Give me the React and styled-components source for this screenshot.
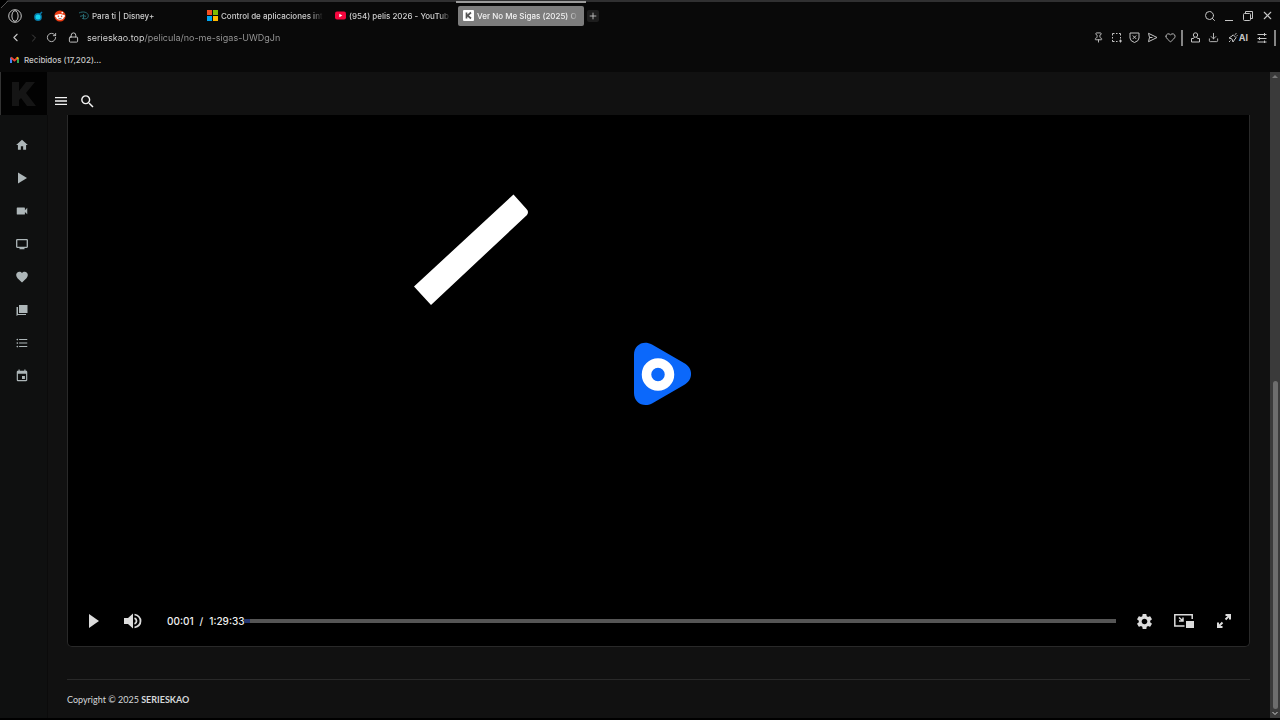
import styled, { createGlobalStyle } from "styled-components";
import { useState } from "react";
import {
  ChevronLeft,
  ChevronRight,
  Download,
  Heart,
  Lock,
  Pin,
  Plus,
  RotateCw,
  Search,
  X,
} from "lucide-react";
import {
  MdEvent,
  MdFavorite,
  MdFormatListBulleted,
  MdHome,
  MdMenu,
  MdSearch,
  MdSettings,
  MdVideocam,
} from "react-icons/md";

const GlobalStyle = createGlobalStyle`
  * {
    box-sizing: border-box;
  }
  body {
    margin: 0;
    background: #090909;
    color: #d0d0d0;
    font-family: Inter, "Liberation Sans", sans-serif;
    font-size: 8px;
  }
  button {
    display: flex;
    align-items: center;
    justify-content: center;
    padding: 0;
    border: none;
    background: none;
    color: inherit;
    font: inherit;
    cursor: pointer;
  }
  svg {
    display: block;
    flex-shrink: 0;
  }
`;

const Window = styled.div`
  display: flex;
  flex-direction: column;
  min-height: 100vh;
  border-top: 2px solid #303031;
  border-bottom: 2px solid #000;
  position: relative;
`;
const Corner = styled.svg`
  position: absolute;
  left: 0;
  top: -2px;
`;
const TabStrip = styled.div`
  display: flex;
  align-items: center;
  height: 27px;
  padding: 0 6px 0 8px;
`;
const Pinned = styled.div`
  display: flex;
  align-items: center;
  gap: 10px;
  width: 66px;
`;
const Tabs = styled.div`
  display: flex;
  gap: 2px;
  flex: 1;
  align-items: center;
`;
const Tab = styled.button`
  position: relative;
  justify-content: flex-start;
  gap: 3px;
  width: 126px;
  height: 20px;
  padding: 0 5px;
  border-radius: 2px;
  background: ${(p) => (p.$active ? "#7d7d7d" : "none")};
  color: ${(p) => (p.$active ? "#f2f2f2" : "#cecece")};
  font-weight: 500;
`;
const TabAccent = styled.span`
  position: absolute;
  top: -5px;
  left: -2px;
  right: -2px;
  height: 2px;
  background: #9b9b9b;
`;
const TabTitle = styled.span`
  flex: 1;
  min-width: 0;
  overflow: hidden;
  white-space: nowrap;
  text-align: left;
  mask-image: linear-gradient(90deg, #000 88%, transparent);
`;
const NewTab = styled.button`
  width: 12px;
  height: 12px;
  margin-left: 1px;
  border-radius: 2px;
  background: #1d1d1d;
`;
const IconRow = styled.div`
  display: flex;
  align-items: center;
  gap: ${(p) => p.$gap || 6}px;
  color: #c4c4c4;
`;
const AddressBar = styled.div`
  display: flex;
  align-items: center;
  height: 17px;
  padding: 0 4px 0 9px;
`;
const Site = styled.label`
  display: flex;
  align-items: center;
  flex: 1;
  gap: 8px;
  margin-left: 11px;
`;
const UrlInput = styled.input`
  flex: 1;
  padding: 0;
  border: none;
  outline: none;
  font: inherit;
  font-size: 9px;
  background: linear-gradient(90deg, #dedede 57px, #9a9a9a 57px);
  background-clip: text;
  -webkit-text-fill-color: transparent;
`;
const Divider = styled.span`
  width: 2px;
  height: 16px;
  margin-left: ${(p) => (p.$start ? 5 : 0)}px;
  background: #858585;
`;
const AiButton = styled.button`
  gap: 1px;
  padding: 0 2px;
  font-size: 9px;
  font-weight: 700;
`;
const Bookmarks = styled.div`
  display: flex;
  align-items: center;
  height: 26px;
  padding: 2px 0 0 10px;
`;
const Bookmark = styled.a`
  display: flex;
  align-items: center;
  gap: 5px;
  color: #c8c8c8;
  font-weight: 500;
  text-decoration: none;
`;

const Page = styled.div`
  display: grid;
  grid-template-columns: 48px 1fr 10px;
  grid-template-rows: 43px 1fr;
  flex: 1;
  background: #111;
`;
const Logo = styled.a`
  display: flex;
  align-items: center;
  justify-content: center;
  background: #020202;
  border-left: 1px solid #333;
  margin-right: 1px;
`;
const Header = styled.header`
  display: flex;
  align-items: center;
  gap: 10px;
  padding: 15px 0 0 5px;
  color: #f4f4f4;
`;
const ScrollTrack = styled.div`
  grid-column: 3;
  grid-row: 1 / 3;
  display: flex;
  flex-direction: column;
  align-items: center;
  padding: 2px 0 0;
  background: #3a3a3a;
  color: #777;
`;
const ScrollThumb = styled.div`
  width: 5px;
  height: 51%;
  margin-top: auto;
  border-radius: 3px;
  background: #6d6d6d;
`;
const Sidebar = styled.nav`
  display: flex;
  flex-direction: column;
  align-items: center;
  gap: 19px;
  padding: 23px 4px 0 0;
  border-right: 1px solid #0b0b0b;
  background: #0f1010;
  color: #adb6b8;
`;
const SideLink = styled.a`
  display: block;
  color: inherit;
`;
const Main = styled.main`
  display: flex;
  flex-direction: column;
  padding: 0 20px 0 19px;
`;
const Player = styled.section`
  display: flex;
  flex-direction: column;
  flex: 1;
  border: 1px solid #292929;
  border-top: none;
  border-radius: 0 0 5px 5px;
  background: #000;
`;
const Stage = styled.div`
  display: flex;
  flex: 1;
  align-items: center;
  justify-content: center;
  padding-top: 36px;
`;
const Controls = styled.div`
  display: flex;
  align-items: center;
  height: 50px;
  padding: 0 5px 0 16px;
  color: #dcdcdc;
`;
const ControlButton = styled.button`
  width: ${(p) => p.$width || 40}px;
  height: 40px;
`;
const Time = styled.div`
  display: flex;
  gap: 6px;
  margin-left: 5px;
  color: #f0f0f0;
  font-size: 10px;
  font-weight: 500;
`;
const Seek = styled.input`
  flex: 1;
  min-width: 0;
  height: 4px;
  margin: 0 8px 0 0;
  appearance: none;
  background: linear-gradient(90deg, #25376f 6px, #555 6px);
  &::-webkit-slider-thumb {
    appearance: none;
    width: 0;
    height: 4px;
  }
`;
const Footer = styled.footer`
  margin-top: 32px;
  padding: 13px 0 12px;
  border-top: 1px solid #292929;
  color: #d5d8da;
  font-family: Lato, "Liberation Sans", sans-serif;
  font-size: 9px;
  line-height: 13px;
`;

const OperaIcon = () => (
  <svg width="14" height="14" viewBox="0 0 14 14" fill="none" stroke="#c8c8c8">
    <circle cx="7" cy="7" r="6.3" />
    <ellipse cx="7" cy="7" rx="3.1" ry="5.3" />
  </svg>
);
const SparkIcon = () => (
  <svg width="12" height="12" viewBox="0 0 12 12">
    <circle cx="6" cy="7" r="3.9" fill="#0878a6" />
    <circle cx="6" cy="7" r="2.5" fill="#12d2ed" />
    <path d="M8 4l2-2" stroke="#0878a6" strokeWidth="1.5" />
  </svg>
);
const RedditIcon = () => (
  <svg width="12" height="12" viewBox="0 0 12 12">
    <circle cx="6" cy="6" r="5.6" fill="#ed3c13" />
    <circle cx="2.3" cy="6" r="1.2" fill="#fff" />
    <circle cx="9.7" cy="6" r="1.2" fill="#fff" />
    <ellipse cx="6" cy="6.8" rx="3.9" ry="2.9" fill="#fff" />
    <circle cx="8.3" cy="2.6" r=".9" fill="#fff" />
    <circle cx="4.4" cy="6.3" r=".8" fill="#ed3c13" />
    <circle cx="7.6" cy="6.3" r=".8" fill="#ed3c13" />
    <path d="M4.4 8.2q1.6 1 3.2 0" stroke="#333" strokeWidth=".6" fill="none" />
  </svg>
);
const DisneyIcon = () => (
  <svg width="10" height="11" viewBox="0 0 10 11" fill="none" stroke="#286a72">
    <path d="M0 3C4 .8 9.300 2.300 9.300 5.800S5 9.400 3 8.200" />
    <path d="M4.500 4v5M1 6.300q3-1.300 6 0" />
  </svg>
);
const MicrosoftIcon = () => (
  <svg width="11" height="11" viewBox="0 0 11 11">
    <path fill="#f25022" d="M0 0h5v5H0z" />
    <path fill="#7fba00" d="M6 0h5v5H6z" />
    <path fill="#00a4ef" d="M0 6h5v5H0z" />
    <path fill="#ffb900" d="M6 6h5v5H6z" />
  </svg>
);
const YoutubeIcon = () => (
  <svg width="11" height="11" viewBox="0 0 11 11">
    <rect y="1.5" width="11" height="8" rx="2" fill="#f5053d" />
    <path d="M4.3 3.7v3.6l3-1.8z" fill="#fff" />
  </svg>
);
const KIcon = () => (
  <svg width="11" height="11" viewBox="0 0 11 11">
    <rect width="11" height="11" rx="1" fill="#fff" />
    <path d="M3.5 2.5v6M8 2.5l-3.5 3 3.5 3" stroke="#555" strokeWidth="1.7" fill="none" />
  </svg>
);
const GmailIcon = () => (
  <svg width="9" height="8" viewBox="0 0 9 8" fill="none" strokeWidth="2">
    <path d="M1 1.5V7" stroke="#4285f4" />
    <path d="M8 1.5V7" stroke="#34a853" />
    <path d="M1 1.5l3.5 3L8 1.5" stroke="#ea4335" />
    <path d="M7 2.4l1-.9" stroke="#fbbc04" />
  </svg>
);
const MinimizeIcon = () => (
  <svg width="12" height="12" viewBox="0 0 12 12">
    <path d="M2 10.5h8" stroke="currentColor" />
  </svg>
);
const RestoreIcon = () => (
  <svg width="12" height="12" viewBox="0 0 12 12" fill="none" stroke="currentColor">
    <rect x="1.5" y="3.5" width="7" height="7" rx="1" />
    <path d="M3.5 3V1.500h7v7H9" />
  </svg>
);
const SnapshotIcon = () => (
  <svg width="11" height="11" viewBox="0 0 11 11" fill="none" stroke="currentColor">
    <path d="M1.500 3.500v-2h2M5 1.500h1.500M8 1.500h1.500v2M9.500 5v1.500M1.500 5v1.500M1.500 8v1.500h2M5 9.500h1.500" />
    <path d="M9.500 7.500v3M8 9h3" />
  </svg>
);
const ShieldIcon = () => (
  <svg width="11" height="11" viewBox="0 0 11 11" fill="none" stroke="currentColor">
    <path d="M1 1h9v5q0 3-4.5 4.5Q1 9 1 6zM3.8 3.5l3.4 3.4M7.2 3.5L3.8 6.9" />
  </svg>
);
const SendIcon = () => (
  <svg width="11" height="11" viewBox="0 0 11 11" fill="none" stroke="currentColor">
    <path d="M1.500 1.300l8.500 4.200-8.500 4.200 1-4.200zM2.500 5.500h3" strokeLinejoin="round" />
  </svg>
);
const ProfileIcon = () => (
  <svg width="11" height="11" viewBox="0 0 11 11" fill="none" stroke="currentColor">
    <circle cx="5.5" cy="3" r="2.2" />
    <path d="M3.500 6.500H1.500v3.500h8V6.500h-2M3.500 6.500l1-1.500M7.500 6.500l-1-1.500" />
  </svg>
);
const AiIcon = () => (
  <svg width="10" height="10" viewBox="0 0 10 10" fill="none" stroke="currentColor">
    <path d="M1 5l3-2 1.2-1.2 3 3L7 6 5 9 4 6zM6.8 1.5l1.7-1M8.5 3l1-.5M1 9l1.5-1.5" />
  </svg>
);
const SlidersIcon = () => (
  <svg width="10" height="10" viewBox="0 0 10 10" fill="none" stroke="currentColor">
    <path d="M.5 1.500h9M.5 5.500h9M.5 9h9M7.500 0v3M2.500 4v3M7.500 7.500V10" />
  </svg>
);
const BigK = () => (
  <svg width="26" height="24" viewBox="0 0 26 24" fill="#151515">
    <path d="M1 0h7v9l7-9h9l-9 11 10 13h-9l-6-8-2 2v6H1z" />
  </svg>
);
const PlayIcon = () => (
  <svg width="14" height="14" viewBox="0 0 14 14" fill="currentColor">
    <path d="M3 1.500L12 7l-9 5.500z" />
  </svg>
);
const TvIcon = () => (
  <svg width="14" height="14" viewBox="0 0 14 14" fill="none" stroke="currentColor">
    <rect x="1.700" y="2.700" width="10.600" height="7.600" rx=".5" strokeWidth="1.300" />
    <path d="M4.500 11.500h5" strokeWidth="1.500" />
  </svg>
);
const ChatIcon = () => (
  <svg width="14" height="14" viewBox="0 0 14 14" fill="currentColor">
    <path d="M4 2h8.500v8H4zM1.500 4H3v7h8v1H3l-1.500 1z" />
  </svg>
);
const VolumeIcon = () => (
  <svg width="18" height="16" viewBox="0 0 18 16">
    <path d="M0 5h4l5-4.5v15L4 11H0z" fill="currentColor" />
    <path
      d="M10.5 5.2q2 .8 2 2.8t-2 2.8M10.5 1.5Q16.5 3 16.5 8t-6 6.5"
      fill="none"
      stroke="currentColor"
      strokeWidth="1.8"
    />
  </svg>
);
const PipIcon = () => (
  <svg width="20" height="16" viewBox="0 0 20 16">
    <path
      d="M10.5 13H.8V1.8h17.4V6M5 4.500l4 3.500M9 4.500V8H5"
      fill="none"
      stroke="currentColor"
      strokeWidth="1.5"
    />
    <path d="M12 8h8v7h-8z" fill="currentColor" />
  </svg>
);
const ExpandIcon = () => (
  <svg width="16" height="16" viewBox="0 0 16 16" fill="none" stroke="currentColor" strokeWidth="2">
    <path d="M9.500 2h4.500v4.500M14 2L9.500 6.500M6.500 14H2V9.500M2 14l4.500-4.500" />
  </svg>
);
const SplashArt = () => (
  <svg width="490" height="360" viewBox="0 0 490 360">
    <path d="M99.5 0.5L112.500 15q1.500 1.500 1.500 3t-1 3L17 111 0 92.500z" fill="#fff" />
    <path
      d="M220 161c0-10 9-15 18-10.500l32 18.500c9.500 5 9.500 17 0 22l-32 18.500c-9 4.500-18-1-18-10.500z"
      fill="#0b68fb"
    />
    <circle cx="244" cy="180.500" r="11.500" fill="none" stroke="#fff" strokeWidth="9.500" />
  </svg>
);

// long titles arrive already trimmed, the mask fades their last letters
const tabs = [
  { title: "Para ti | Disney+", Icon: DisneyIcon },
  { title: "Control de aplicaciones int", Icon: MicrosoftIcon },
  { title: "(954) pelis 2026 - YouTub", Icon: YoutubeIcon },
  { title: "Ver No Me Sigas (2025) O", Icon: KIcon },
];

const sideLinks = [
  { name: "Inicio", Icon: MdHome },
  { name: "Estrenos", Icon: PlayIcon },
  { name: "Películas", Icon: MdVideocam },
  { name: "Series", Icon: TvIcon },
  { name: "Favoritos", Icon: MdFavorite },
  { name: "Comentarios", Icon: ChatIcon },
  { name: "Listas", Icon: MdFormatListBulleted },
  { name: "Calendario", Icon: MdEvent },
];

function App() {
  const [active, setActive] = useState(3);
  const [url, setUrl] = useState("serieskao.top/pelicula/no-me-sigas-UWDgJn");
  const [position, setPosition] = useState(1);

  return (
    <>
      <GlobalStyle />
      <Window>
        <Corner width="9" height="9" viewBox="0 0 9 9">
          <path d="M0 0h8L0 8z" fill="#000" />
          <path d="M8 1L1 8" stroke="#555" />
        </Corner>
        <TabStrip>
          <Pinned>
            <OperaIcon />
            <SparkIcon />
            <RedditIcon />
          </Pinned>
          <Tabs>
            {tabs.map(({ title, Icon }, i) => (
              <Tab key={title} $active={i === active} onClick={() => setActive(i)}>
                {i === active && <TabAccent />}
                <Icon />
                <TabTitle>{title}</TabTitle>
              </Tab>
            ))}
            <NewTab aria-label="Nueva pestaña">
              <Plus size={10} />
            </NewTab>
          </Tabs>
          <IconRow $gap={7}>
            <button aria-label="Buscar">
              <Search size={12} />
            </button>
            <button aria-label="Minimizar">
              <MinimizeIcon />
            </button>
            <button aria-label="Restaurar">
              <RestoreIcon />
            </button>
            <button aria-label="Cerrar">
              <X size={13} />
            </button>
          </IconRow>
        </TabStrip>
        <AddressBar>
          <IconRow>
            <button aria-label="Atrás">
              <ChevronLeft size={13} />
            </button>
            <button aria-label="Adelante" disabled>
              <ChevronRight size={12} color="#444" />
            </button>
            <button aria-label="Recargar">
              <RotateCw size={11} />
            </button>
          </IconRow>
          <Site>
            <Lock size={11} />
            <UrlInput
              aria-label="Dirección"
              value={url}
              onChange={(e) => setUrl(e.target.value)}
            />
          </Site>
          <IconRow $gap={7}>
            <button aria-label="Fijar">
              <Pin size={11} />
            </button>
            <button aria-label="Captura">
              <SnapshotIcon />
            </button>
            <button aria-label="Protección">
              <ShieldIcon />
            </button>
            <button aria-label="Enviar">
              <SendIcon />
            </button>
            <button aria-label="Favorito">
              <Heart size={11} />
            </button>
          </IconRow>
          <IconRow $gap={7}>
            <Divider $start />
            <button aria-label="Perfil">
              <ProfileIcon />
            </button>
            <button aria-label="Descargas">
              <Download size={11} />
            </button>
            <AiButton>
              <AiIcon />
              AI
            </AiButton>
            <button aria-label="Ajustes">
              <SlidersIcon />
            </button>
            <Divider />
          </IconRow>
        </AddressBar>
        <Bookmarks>
          <Bookmark href="#">
            <GmailIcon />
            Recibidos (17,202)...
          </Bookmark>
        </Bookmarks>

        <Page>
          <Logo href="#" aria-label="SeriesKao">
            <BigK />
          </Logo>
          <Header>
            <button aria-label="Menú">
              <MdMenu size={16} />
            </button>
            <button aria-label="Buscar película">
              <MdSearch size={17} stroke="currentColor" />
            </button>
          </Header>
          <ScrollTrack>
            <svg width="6" height="5" viewBox="0 0 6 5">
              <path d="M0 4l3-3 3 3z" fill="currentColor" />
            </svg>
            <ScrollThumb />
            <svg width="6" height="9" viewBox="0 0 6 9">
              <path d="M.5 3L3 5.5 5.5 3" fill="none" stroke="#ccc" />
            </svg>
          </ScrollTrack>
          <Sidebar>
            {sideLinks.map(({ name, Icon }) => (
              <SideLink key={name} href="#" aria-label={name}>
                <Icon size={14} />
              </SideLink>
            ))}
          </Sidebar>
          <Main>
            <Player>
              <Stage>
                <SplashArt />
              </Stage>
              <Controls>
                <ControlButton $width={20} aria-label="Reproducir">
                  <svg width="10" height="14" viewBox="0 0 10 14">
                    <path d="M0 0l10 7-10 7z" fill="currentColor" />
                  </svg>
                </ControlButton>
                <ControlButton $width={58} aria-label="Volumen">
                  <VolumeIcon />
                </ControlButton>
                <Time>
                  <span>00:01</span>
                  <span>/</span>
                  <span>1:29:33</span>
                </Time>
                <Seek
                  type="range"
                  aria-label="Progreso"
                  min="0"
                  max="5373"
                  value={position}
                  onChange={(e) => setPosition(Number(e.target.value))}
                />
                <ControlButton aria-label="Configuración">
                  <MdSettings size={19} />
                </ControlButton>
                <ControlButton aria-label="Imagen en imagen">
                  <PipIcon />
                </ControlButton>
                <ControlButton aria-label="Pantalla completa">
                  <ExpandIcon />
                </ControlButton>
              </Controls>
            </Player>
            <Footer>
              Copyright © 2025 <strong>SERIESKAO</strong>
            </Footer>
          </Main>
        </Page>
      </Window>
    </>
  );
}

export default App;
